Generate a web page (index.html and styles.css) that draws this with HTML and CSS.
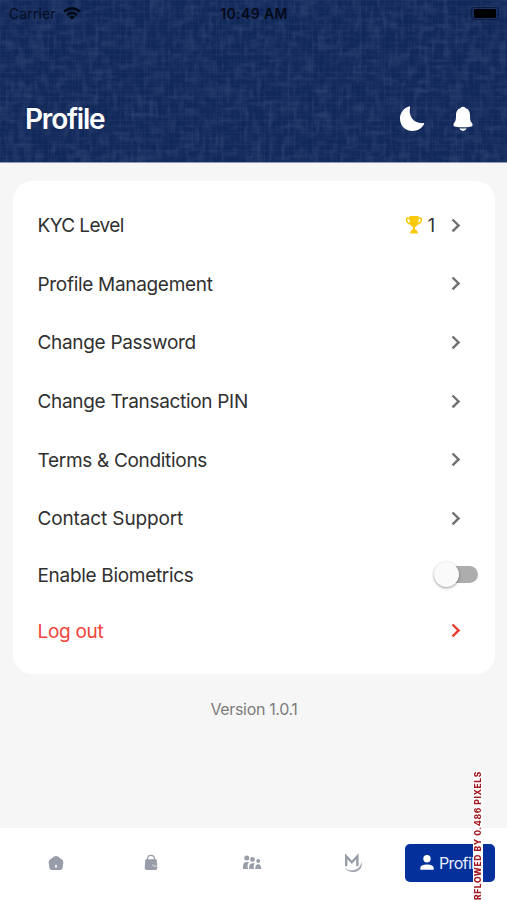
FILE: index.html
```html
<!DOCTYPE html>
<html lang="en">
<head>
<meta charset="utf-8">
<title>Profile</title>
<link rel="stylesheet" href="styles.css">
</head>
<body>
<div class="screen">
  <header class="header">
    <svg class="texture" width="507" height="162" aria-hidden="true">
      <filter id="warp" x="0" y="0" width="100%" height="100%"><feTurbulence type="fractalNoise" baseFrequency="0.06 0.16" numOctaves="2" seed="4"/><feColorMatrix values="0 0 0 0 .36  0 0 0 0 .42  0 0 0 0 .62  1.8 0 0 0 -.82"/></filter>
      <filter id="weft" x="0" y="0" width="100%" height="100%"><feTurbulence type="fractalNoise" baseFrequency="0.16 0.06" numOctaves="2" seed="9"/><feColorMatrix values="0 0 0 0 .36  0 0 0 0 .42  0 0 0 0 .62  1.8 0 0 0 -.82"/></filter>
      <rect width="507" height="162" filter="url(#warp)"/>
      <rect width="507" height="162" filter="url(#weft)"/>
    </svg>
    <div class="grid"></div>
    <div class="status">
      <div class="carrier"><span class="carrier-name">Carrier</span>
        <svg width="18" height="13" viewBox="0 0 18 13"><g fill="none" stroke="#050a18" stroke-width="2.6"><path d="M1 4.8Q9-2 17 4.8"/><path d="M4 8Q9 3.8 14 8"/></g><path d="M6 9.7Q9 7.6 12 9.7L9 12.8Z" fill="#050a18"/></svg>
      </div>
      <span class="time">10:49 AM</span>
      <div class="battery"><i></i></div>
    </div>
    <div class="titlebar">
      <h1>Profile</h1>
      <svg class="moon" width="26" height="26" viewBox="0 0 26 26"><path d="M11.2 .8C9 9.5 14 17.8 24.4 17.1Q25.6 17.1 25 18.3C22.7 22.5 18.5 25 13.4 25C6.4 25 1 19.6 1 12.7C1 6.8 4.7 2.1 9.9 .5Q11.2 .1 11.2 .8Z" fill="#fff"/></svg>
      <svg class="bell" width="20" height="26" viewBox="0 0 20 26"><path d="M10 .7Q12.2 .7 12.7 2.3C16 3.4 17 6.2 17 9.4C17 14 17.4 15 19 17C20.2 19 19.4 20.6 17.3 20.8Q10 21.8 2.7 20.8C.6 20.6-.2 19 1 17C2.6 15 3 14 3 9.4C3 6.2 4 3.4 7.3 2.3Q7.8 .7 10 .7Z" fill="#fff"/><path d="M6.4 22.2Q10 22.8 13.6 22.2Q12.6 25 10 25Q7.4 25 6.4 22.2Z" fill="#fff"/></svg>
    </div>
  </header>

  <main class="content">
    <section class="card">
      <div class="row"><span class="label tight">KYC Level</span>
        <span class="level"><svg width="16" height="18" viewBox="0 0 16 18"><path fill="#fbc90b" fill-rule="evenodd" d="M3.5 0h9v1.5H16v3Q15.5 8 11.6 8.8Q10.5 10.8 9 11.2V13Q11.6 14 12 17.5H4Q4.4 14 7 13V11.2Q5.5 10.8 4.4 8.8Q.5 8 0 4.5v-3h3.5ZM1.4 3v1.5Q1.9 6.3 3.8 7Q3.4 5 3.4 3ZM12.6 3Q12.6 5 12.2 7Q14.1 6.3 14.6 4.5V3Z"/></svg><b>1</b></span>
        <svg class="chev" viewBox="0 0 10 15"><path d="M1.5 1.5L7.6 7.4L1.5 13.3"/></svg></div>
      <div class="row"><span class="label">Profile Management</span><svg class="chev" viewBox="0 0 10 15"><path d="M1.5 1.5L7.6 7.4L1.5 13.3"/></svg></div>
      <div class="row"><span class="label">Change Password</span><svg class="chev" viewBox="0 0 10 15"><path d="M1.5 1.5L7.6 7.4L1.5 13.3"/></svg></div>
      <div class="row"><span class="label">Change Transaction PIN</span><svg class="chev" viewBox="0 0 10 15"><path d="M1.5 1.5L7.6 7.4L1.5 13.3"/></svg></div>
      <div class="row"><span class="label">Terms &amp; Conditions</span><svg class="chev" viewBox="0 0 10 15"><path d="M1.5 1.5L7.6 7.4L1.5 13.3"/></svg></div>
      <div class="row"><span class="label loose">Contact Support</span><svg class="chev" viewBox="0 0 10 15"><path d="M1.5 1.5L7.6 7.4L1.5 13.3"/></svg></div>
      <div class="row row-switch"><span class="label">Enable Biometrics</span><div class="switch"><i class="knob"></i></div></div>
      <div class="row row-logout"><span class="label">Log out</span><svg class="chev" viewBox="0 0 10 15"><path d="M1.5 1.5L7.6 7.4L1.5 13.3"/></svg></div>
    </section>
    <p class="version">Version 1.0.1</p>
  </main>

  <nav class="tabs">
    <div class="tab"><svg width="16" height="16" viewBox="0 0 16 16"><path d="M5.8 1.7Q8 .2 10.2 1.7L14 4.6Q15.7 6 15.3 8L14.5 13Q14.2 15 12.3 15H3.7Q1.8 15 1.5 13L.7 8Q.3 6 2 4.6Z" fill="#989ea9"/><rect x="7" y="9.7" width="2" height="3" rx=".8" fill="#eceef1"/></svg></div>
    <div class="tab"><svg width="14" height="17" viewBox="0 0 14 17"><path d="M3.6 6V4.5Q3.6 1.3 7 1.3T10.4 4.5V6" fill="none" stroke="#989ea9" stroke-width="1.3"/><path d="M2.2 5.3H11.8Q12.6 5.3 12.8 6.4L13.3 14Q13.3 16 11.4 16H2.6Q.7 16 .7 14L1.2 6.4Q1.4 5.3 2.2 5.3Z" fill="#989ea9"/><path d="M8 10.5Q9 12.3 12.8 12.3" fill="none" stroke="#e3e5e9" stroke-width=".9"/></svg></div>
    <div class="tab"><svg width="20" height="15" viewBox="0 0 20 15"><g fill="#989ea9"><circle cx="4.8" cy="3.1" r="2.5"/><circle cx="10.5" cy="4.5" r="2.4"/><circle cx="16.2" cy="6" r="2"/><path d="M1 14Q.5 7.3 4 7H7Q4.7 9.5 6 14ZM7.2 14Q6.8 8.5 10 8.2H13Q10.8 10.7 12.2 14ZM13.3 14Q13.1 9.2 16.2 9.2T19.3 14Z"/></g></svg></div>
    <div class="tab"><svg width="20" height="20" viewBox="0 0 20 20"><path d="M3.2 13.2V3.2L8.8 9.2L14.4 3.2V13.2" fill="none" stroke="#989ea9" stroke-width="2.4"/><path d="M1.5 14.4Q6 18.7 12 16.7T18.4 8.8Q20 16 13.6 18.5Q6 20.6 1.5 14.4Z" fill="#a4a9b2"/></svg></div>
    <div class="tab-active"><svg width="14" height="15" viewBox="0 0 14 15"><circle cx="7" cy="3.8" r="3.7" fill="#fff"/><path d="M.3 14.8V13Q.3 9.4 7 9.4T13.7 13V14.8Z" fill="#fff"/></svg><span>Profile</span></div>
    <div class="overflow-flag">RIGHT OVERFLOWED BY 0.486 PIXELS</div>
  </nav>
</div>
</body>
</html>
```
FILE: styles.css
```css
* { box-sizing: border-box; margin: 0; }
html, body { height: 100%; overflow: hidden; }
body { font-family: Inter, "Liberation Sans", sans-serif; background: #f6f6f6; }
svg { display: block; flex: none; }
.screen { position: relative; width: 507px; height: 900px; display: flex; flex-direction: column; overflow: hidden; background: #f6f6f6; }

.header { position: relative; height: 163px; flex: none; background: #11285a; border-bottom: 1px solid #8e9ab6; }
.texture { position: absolute; inset: 0; opacity: .17; }
.grid { position: absolute; inset: 0; background: repeating-linear-gradient(90deg, rgba(120,140,190,.05) 0 1px, transparent 1px 6px), repeating-linear-gradient(rgba(120,140,190,.05) 0 1px, transparent 1px 6px); }
.status { position: relative; height: 28px; display: grid; grid-template-columns: 1fr auto 1fr; align-items: center; padding: 0 8px 0 9px; color: #050a18; }
.carrier { display: flex; align-items: center; gap: 7px; margin-top: -2px; }
.carrier-name { font-size: 14px; letter-spacing: .1px; color: #070e22; }
.time { margin-top: -1px; font-size: 14px; font-weight: 600; letter-spacing: .4px; }
.battery { justify-self: end; width: 28px; height: 13px; padding: 1px 2px; margin-top: -2px; border: 1px solid #0c1b41; border-radius: 3px; }
.battery i { display: block; width: 22px; height: 9px; border-radius: 1px; background: #000; }
.titlebar { position: relative; display: flex; align-items: center; height: 40px; margin-top: 71px; padding: 0 34px 0 25px; }
h1 { flex: 1; font-size: 28px; font-weight: 600; letter-spacing: -1.2px; color: #fff; }
.bell { margin-left: 28px; }

.content { flex: 1; padding: 18px 12px 0 13px; }
.card { height: 493px; padding: 15px 34px 0 25px; background: #fff; border-radius: 19px; }
.row { height: 58.6px; display: flex; align-items: center; justify-content: space-between; font-size: 19px; line-height: 24px; color: #303030; white-space: nowrap; }
.label { padding-top: 2px; margin-left: -.5px; letter-spacing: -.31px; }
.label.tight { letter-spacing: -.6px; }
.label.loose { letter-spacing: -.13px; }
.chev { width: 10px; height: 15px; fill: none; stroke: #707070; stroke-width: 2.4; }
.level { display: flex; align-items: center; gap: 6px; margin-left: auto; margin-right: 16px; }
.level b { padding-top: 2px; font-size: 18px; font-weight: 400; }
.row-switch { height: 54px; }
.switch { position: relative; width: 40px; height: 17px; margin-right: -17px; border-radius: 9px; background: #adadad; }
.knob { position: absolute; left: -4px; top: -4px; width: 25px; height: 25px; border-radius: 50%; background: #fafafa; box-shadow: 0 1px 3px rgba(0,0,0,.4); }
.row-logout { color: #f04438; }
.row-logout .chev { stroke: #e73c2f; }
.version { margin-top: 24px; font-size: 16px; line-height: 22px; letter-spacing: -.35px; text-align: center; color: #7c7c7c; }

.tabs { position: relative; flex: none; height: 72px; display: grid; grid-template-columns: 111px 79px 123px 80px 12px 90px; align-items: center; background: #fff; }
.tab { display: flex; justify-content: center; padding-bottom: 3px; }
.tab-active { grid-column: 6; height: 38px; margin-bottom: 3px; padding-left: 15px; display: flex; align-items: center; gap: 5px; border-radius: 5px; background: #03309a; color: #e9eeff; font-size: 16px; letter-spacing: -.65px; }
.overflow-flag { position: absolute; left: 473px; top: -57px; width: 10px; writing-mode: vertical-rl; transform: rotate(180deg); background: #fff; color: #a31a20; font-size: 8.5px; line-height: 10px; font-weight: 800; letter-spacing: .6px; white-space: nowrap; }
```
